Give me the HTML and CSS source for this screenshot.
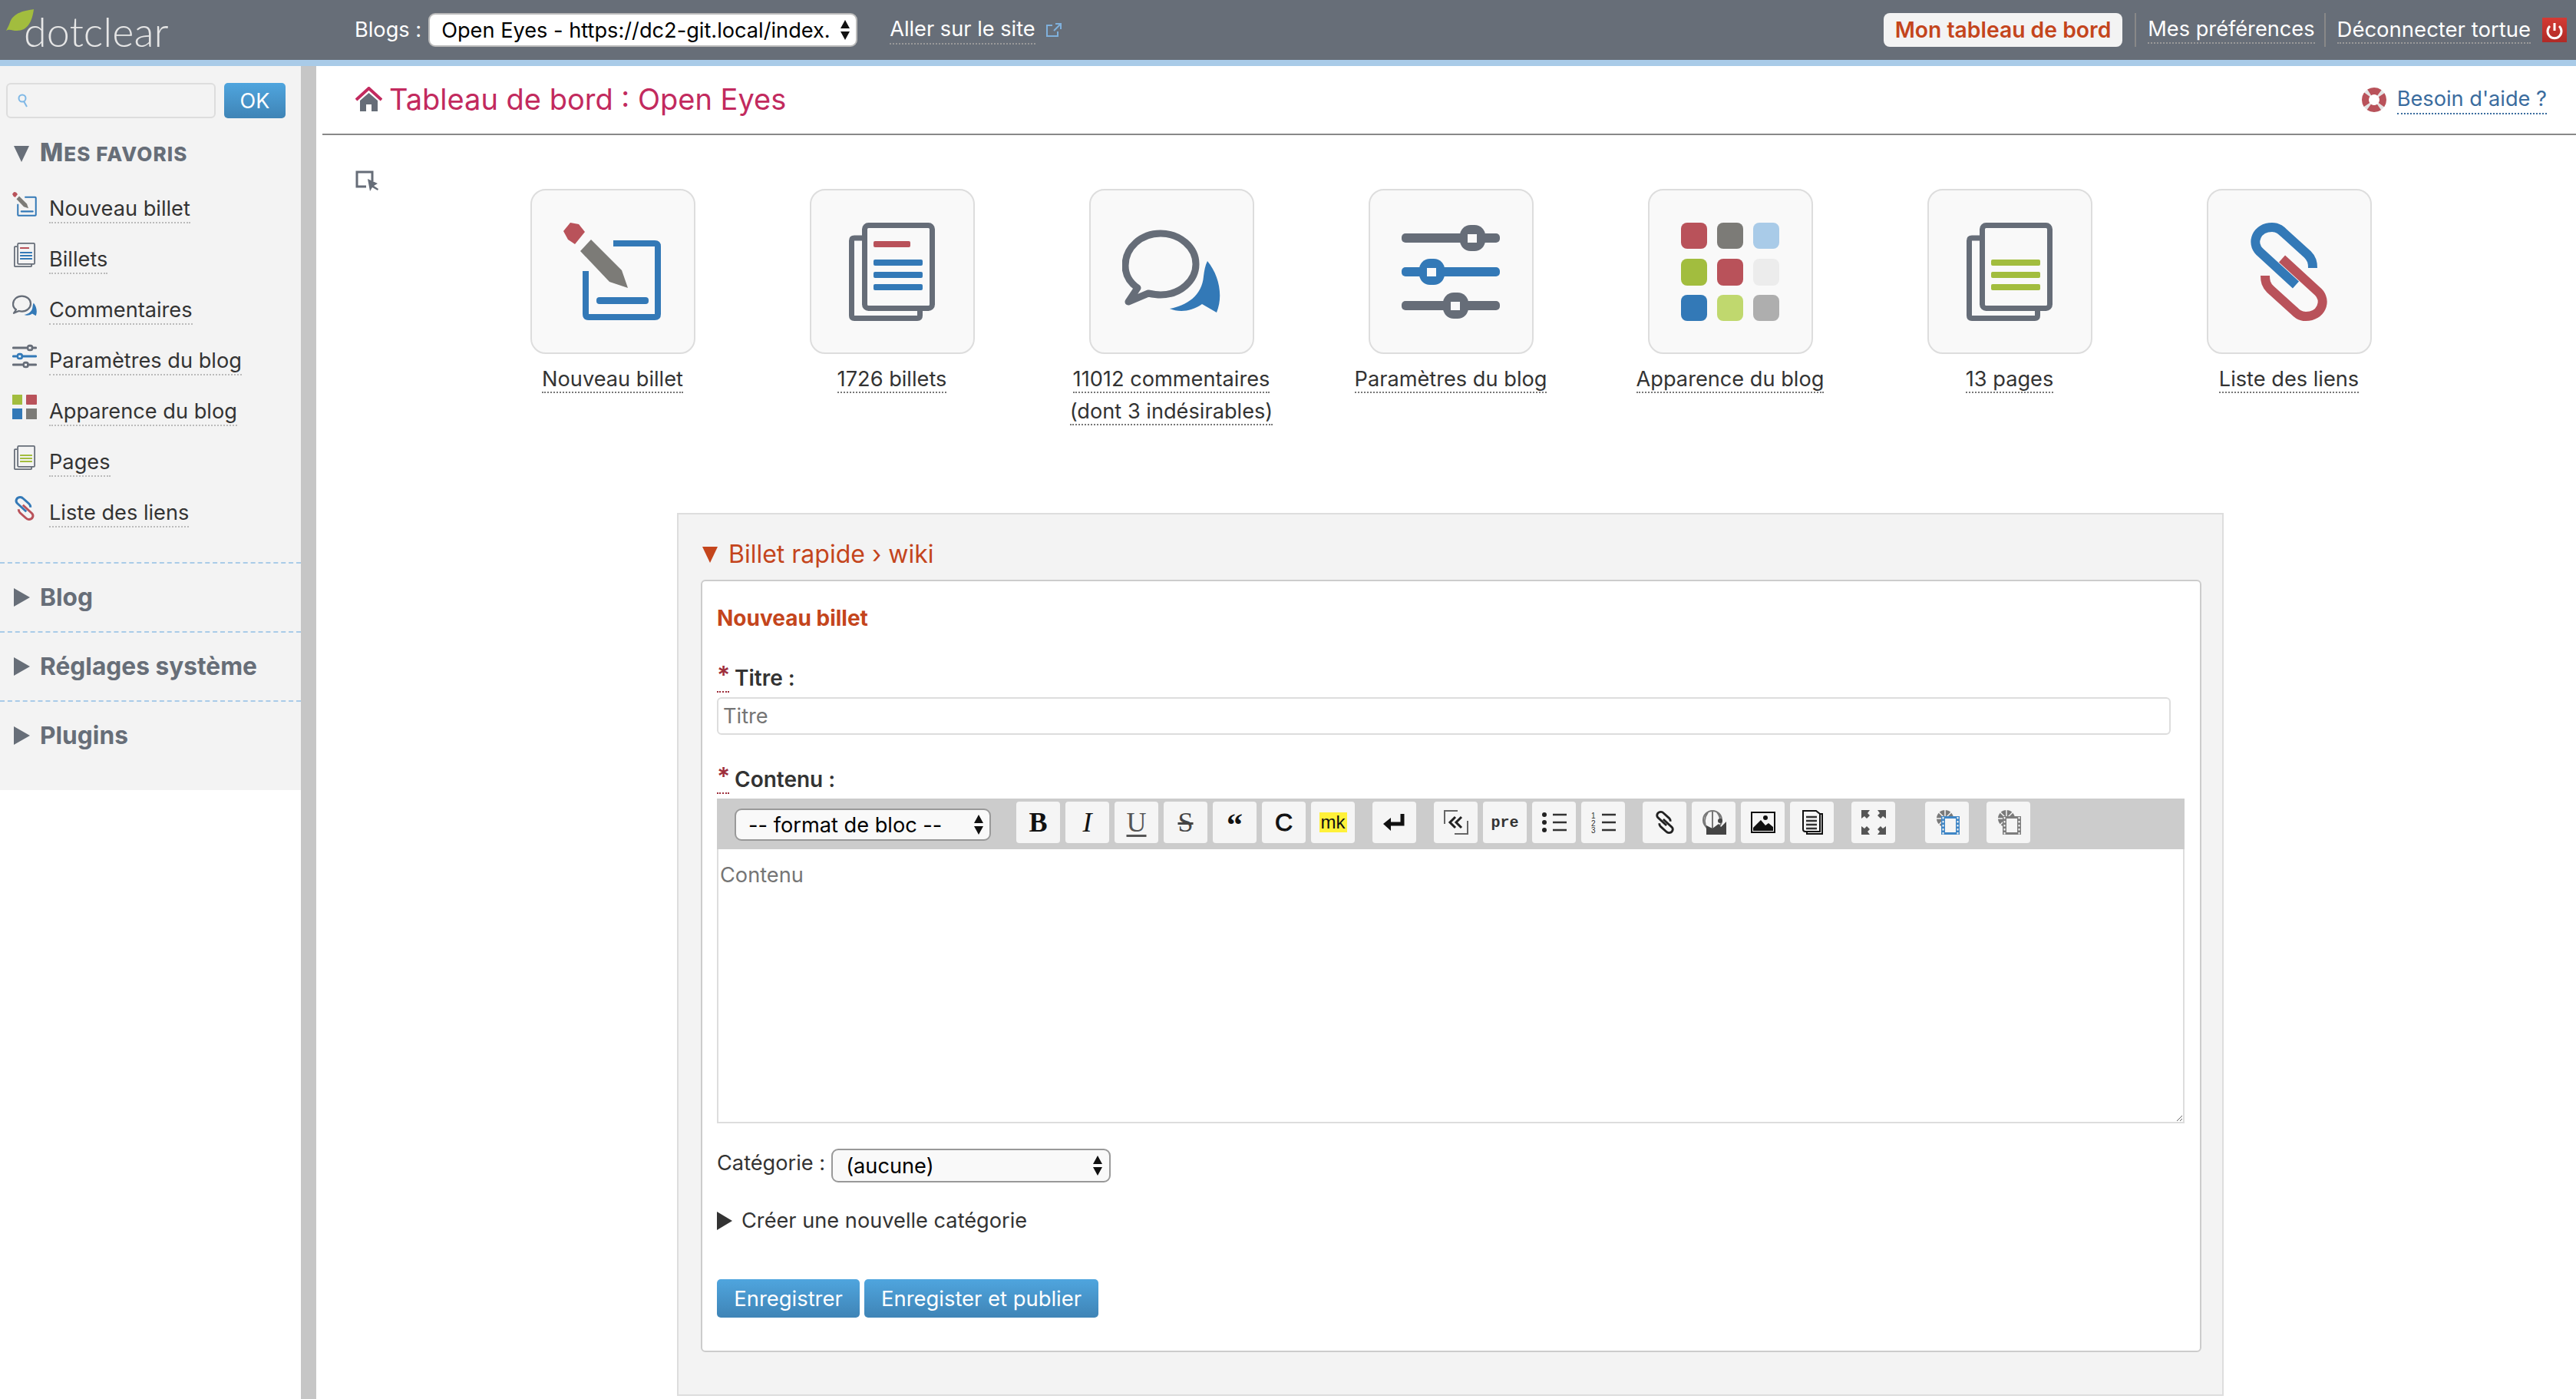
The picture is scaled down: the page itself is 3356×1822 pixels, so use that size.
FILE: index.html
```html
<!DOCTYPE html>
<html lang="fr">
<head>
    <meta charset="UTF-8">
    <meta name="viewport" content="width=device-width, initial-scale=1.0">
    <title>Tableau de bord : Open Eyes</title>
    <link rel="stylesheet" href="styles.css">
</head>
<body>
    <!-- shared icons, drawn on a 128 grid -->
    <svg class="sprites" xmlns="http://www.w3.org/2000/svg">
        <symbol id="i-new" viewBox="0 0 128 128">
            <path d="M65 27H119q4 0 4 4V119q0 4-4 4H33q-4 0-4-4V63" fill="none" stroke="#3379b7" stroke-width="8"/>
            <rect x="43" y="97" width="68" height="9" rx="4" fill="#3379b7"/>
            <path d="M9 0L20 2L28 12L15 28L6 22L0 11Z" fill="#b9525a"/>
            <path d="M36 22L76 62L84 85L60 77L22 37Z" fill="#7c7b77"/>
        </symbol>
        <symbol id="i-posts" viewBox="0 0 128 128">
            <rect x="28.500" y="3.500" width="88" height="108" rx="5" fill="none" stroke="#666d78" stroke-width="7"/>
            <path d="M25 20H15q-3.500 0-3.500 3.500V121q0 3.500 3.500 3.500H97q3.500 0 3.500-3.500V112" fill="none" stroke="#666d78" stroke-width="7"/>
            <rect x="40" y="24" width="48" height="8" rx="2" fill="#b9525a"/>
            <rect x="40" y="48" width="64" height="8" rx="2" fill="#3379b7"/>
            <rect x="40" y="64" width="64" height="8" rx="2" fill="#3379b7"/>
            <rect x="40" y="80" width="64" height="8" rx="2" fill="#3379b7"/>
        </symbol>
        <symbol id="i-pages" viewBox="0 0 128 128">
            <rect x="28.500" y="3.500" width="88" height="108" rx="5" fill="none" stroke="#666d78" stroke-width="7"/>
            <path d="M25 20H15q-3.500 0-3.500 3.500V121q0 3.500 3.500 3.500H97q3.500 0 3.500-3.500V112" fill="none" stroke="#666d78" stroke-width="7"/>
            <rect x="40" y="48" width="64" height="8" rx="2" fill="#a2bd3e"/>
            <rect x="40" y="64" width="64" height="8" rx="2" fill="#a2bd3e"/>
            <rect x="40" y="80" width="64" height="8" rx="2" fill="#a2bd3e"/>
        </symbol>
        <symbol id="i-comments" viewBox="0 0 128 128">
            <path d="M111 50C126 68 132 95 123 117L104 106C90 116 74 117 62 112C84 108 104 95 106 70C107 62 108 56 111 50Z" fill="#3379b7"/>
            <path d="M50 14C25 14 4 32 4 56C4 68 10 78 20 85L8 103L34 92C39 93 45 94 50 94C75 94 96 76 96 54C96 32 75 14 50 14Z" fill="none" stroke="#666d78" stroke-width="9" stroke-linejoin="round"/>
        </symbol>
        <symbol id="i-params" viewBox="0 0 128 128">
            <rect x="0" y="14" width="128" height="12" rx="5" fill="#666d78"/>
            <rect x="76" y="3" width="33" height="34" rx="14" fill="#666d78"/>
            <rect x="86" y="15" width="12" height="11" fill="#f9f9f9"/>
            <rect x="0" y="58" width="128" height="12" rx="5" fill="#3379b7"/>
            <rect x="23" y="47" width="33" height="34" rx="14" fill="#3379b7"/>
            <rect x="33" y="59" width="12" height="11" fill="#f9f9f9"/>
            <rect x="0" y="102" width="128" height="12" rx="5" fill="#666d78"/>
            <rect x="54" y="91" width="33" height="34" rx="14" fill="#666d78"/>
            <rect x="64" y="103" width="12" height="11" fill="#f9f9f9"/>
        </symbol>
        <symbol id="i-theme" viewBox="0 0 128 128">
            <rect x="0" y="0" width="34" height="34" rx="8" fill="#b9525a"/>
            <rect x="47" y="0" width="34" height="34" rx="8" fill="#7c7b77"/>
            <rect x="94" y="0" width="34" height="34" rx="8" fill="#a9cbe8"/>
            <rect x="0" y="47" width="34" height="35" rx="8" fill="#a2bd3e"/>
            <rect x="47" y="47" width="34" height="35" rx="8" fill="#b9525a"/>
            <rect x="94" y="47" width="34" height="35" rx="8" fill="#ececec"/>
            <rect x="0" y="94" width="34" height="34" rx="8" fill="#3379b7"/>
            <rect x="47" y="94" width="34" height="34" rx="8" fill="#c0d86e"/>
            <rect x="94" y="94" width="34" height="34" rx="8" fill="#aeaeae"/>
        </symbol>
        <symbol id="i-theme-small" viewBox="0 0 32 32">
            <rect x="0" y="0" width="13" height="13" fill="#a2bd3e"/>
            <rect x="18" y="0" width="14" height="13" rx="1" fill="#b9525a"/>
            <rect x="0" y="18" width="13" height="14" fill="#3379b7"/>
            <rect x="18" y="18" width="14" height="14" fill="#7c7b77"/>
        </symbol>
        <symbol id="i-links" viewBox="0 0 128 128">
            <path d="M73 81L26 38C14 26 22 6 42 6C50 6 54 10 58 14L88 41C94 47 95 52 95 59" fill="none" stroke="var(--link-a, #3379b7)" stroke-width="12"/>
            <path d="M55 47L102 90C114 102 106 122 86 122C78 122 74 118 70 114L40 87C34 81 33 76 33 69" fill="none" stroke="var(--link-b, #b9525a)" stroke-width="12"/>
        </symbol>
        <symbol id="i-film" viewBox="0 0 32 32">
            <circle cx="13" cy="11" r="11" fill="#7a7a7a"/>
            <circle cx="13" cy="11" r="2.500" fill="#f5f5f5"/>
            <path d="M13 0V22M2 11H24M5 3L21 19M21 3L5 19" stroke="#f5f5f5" stroke-width="1.500"/>
            <rect x="8" y="8" width="24" height="24" fill="var(--film, #7d7d7d)"/>
            <rect x="13" y="11" width="14" height="18" fill="#f5f5f5"/>
            <path d="M10.500 9V32M29.500 9V32" stroke="#f5f5f5" stroke-width="2" stroke-dasharray="2.500 2.500"/>
        </symbol>
    </svg>

    <header class="topbar">
        <a class="logo" href="#">
            <svg class="logo-leaf" width="36" height="28" viewBox="0 0 36 28"><path d="M36 0C24 2 10 4 5 17C4 20 2 24 0 28C4 25 8 28 14 28C28 28 34 16 36 0Z" fill="#a2bd3e"/></svg>
            <span class="logo-text">dotclear</span>
        </a>
        <label class="blog-switch" for="blogSelect">Blogs :</label>
        <select id="blogSelect" class="blog-select">
            <option>Open Eyes - https://dc2-git.local/index.</option>
        </select>
        <a class="site-link" href="#"><span class="dotted">Aller sur le site</span>
            <svg class="ext-icon" width="22" height="20" viewBox="0 0 22 20"><path d="M9 4H2V18H16V12" fill="none" stroke="#7fb0dc" stroke-width="2"/><path d="M11 11L20 2M13 2H20V9" fill="none" stroke="#7fb0dc" stroke-width="2"/></svg>
        </a>
        <nav class="user-nav">
            <a class="user-current" href="#">Mon tableau de bord</a>
            <a class="user-link user-prefs" href="#"><span class="dotted">Mes préférences</span></a>
            <a class="user-link user-logout" href="#"><span class="dotted">Déconnecter tortue</span><span class="power"><svg width="32" height="32" viewBox="0 0 32 32"><path d="M10 11A9 9 0 1 0 22 11" fill="none" stroke="#fff" stroke-width="3"/><path d="M16 7V17" stroke="#fff" stroke-width="3"/></svg></span></a>
        </nav>
    </header>

    <div class="wrapper">
        <aside class="sidebar">
            <div class="sidebar-panel">
                <form class="search">
                    <div class="search-input">
                        <svg width="14" height="18" viewBox="0 0 14 18"><circle cx="6" cy="6" r="4.500" fill="none" stroke="#7fb8e6" stroke-width="2"/><path d="M8 10L12 17" stroke="#7fb8e6" stroke-width="2"/></svg>
                    </div>
                    <button class="btn search-btn" type="button">OK</button>
                </form>

                <h3 class="fav-title"><span class="tri-down tri-side"></span><span class="fav-text">Mes favoris</span></h3>
                <ul class="fav-list">
                    <li><svg class="fav-icon"><use href="#i-new"/></svg><a href="#">Nouveau billet</a></li>
                    <li><svg class="fav-icon"><use href="#i-posts"/></svg><a href="#">Billets</a></li>
                    <li><svg class="fav-icon"><use href="#i-comments"/></svg><a href="#">Commentaires</a></li>
                    <li><svg class="fav-icon"><use href="#i-params"/></svg><a href="#">Paramètres du blog</a></li>
                    <li><svg class="fav-icon"><use href="#i-theme-small"/></svg><a href="#">Apparence du blog</a></li>
                    <li><svg class="fav-icon"><use href="#i-pages"/></svg><a href="#">Pages</a></li>
                    <li><svg class="fav-icon"><use href="#i-links"/></svg><a href="#">Liste des liens</a></li>
                </ul>

                <h3 class="menu-title"><span class="tri-right tri-side"></span>Blog</h3>
                <h3 class="menu-title"><span class="tri-right tri-side"></span>Réglages système</h3>
                <h3 class="menu-title"><span class="tri-right tri-side"></span>Plugins</h3>
            </div>
        </aside>

        <main class="content">
            <div class="page-head">
                <h2 class="page-title">
                    <svg width="35" height="32" viewBox="0 0 35 32"><path d="M1 17L17.500 2L34 17" fill="none" stroke="#c22a5e" stroke-width="4"/><path d="M6 18L17.500 8L29 18V32H21V23H14V32H6Z" fill="#666d78"/></svg>
                    Tableau de bord : Open Eyes
                </h2>
                <a class="help-link" href="#">
                    <svg width="32" height="32" viewBox="0 0 32 32"><circle cx="16" cy="16" r="11.500" fill="none" stroke="#e4e4e4" stroke-width="9"/><circle cx="16" cy="16" r="11.500" fill="none" stroke="#b9525a" stroke-width="9" stroke-dasharray="14 4.060" stroke-dashoffset="7"/></svg>
                    <span class="dotted">Besoin d'aide ?</span>
                </a>
            </div>

            <div class="dash">
                <div class="dash-toggle">
                    <svg width="32" height="28" viewBox="0 0 32 28"><path d="M22 14V2H2V21H14" fill="none" stroke="#666d78" stroke-width="3"/><path d="M16 11L19 27L22 22L29 26L30 24L24 20L29 17Z" fill="#666d78"/></svg>
                </div>
                <ul class="dash-list">
                    <li><span class="dash-card"><svg class="dash-icon"><use href="#i-new"/></svg></span><a href="#">Nouveau billet</a></li>
                    <li><span class="dash-card"><svg class="dash-icon"><use href="#i-posts"/></svg></span><a href="#">1726 billets</a></li>
                    <li><span class="dash-card"><svg class="dash-icon"><use href="#i-comments"/></svg></span><a href="#">11012 commentaires</a><br><a href="#">(dont 3 indésirables)</a></li>
                    <li><span class="dash-card"><svg class="dash-icon"><use href="#i-params"/></svg></span><a href="#">Paramètres du blog</a></li>
                    <li><span class="dash-card"><svg class="dash-icon"><use href="#i-theme"/></svg></span><a href="#">Apparence du blog</a></li>
                    <li><span class="dash-card"><svg class="dash-icon"><use href="#i-pages"/></svg></span><a href="#">13 pages</a></li>
                    <li><span class="dash-card"><svg class="dash-icon"><use href="#i-links"/></svg></span><a href="#">Liste des liens</a></li>
                </ul>
            </div>

            <section class="quick-box">
                <h3 class="quick-title"><span class="tri-down tri-orange"></span>Billet rapide › wiki</h3>
                <form class="quick-form">
                    <h4 class="form-title">Nouveau billet</h4>

                    <label class="req-label label-title" for="title"><abbr class="req">*</abbr>Titre :</label>
                    <input class="title-input" type="text" id="title" placeholder="Titre">

                    <label class="req-label label-content" for="content"><abbr class="req">*</abbr>Contenu :</label>
                    <div class="toolbar">
                        <select class="format-select"><option>-- format de bloc --</option></select>
                        <button class="tb tb-text tb-b" type="button">B</button>
                        <button class="tb tb-text tb-i" type="button">I</button>
                        <button class="tb tb-text tb-u" type="button">U</button>
                        <button class="tb tb-text tb-s" type="button">S</button>
                        <button class="tb tb-text tb-q" type="button">“</button>
                        <button class="tb tb-text tb-c" type="button">C</button>
                        <button class="tb tb-text" type="button"><span class="tb-mk">mk</span></button>
                        <button class="tb sep" type="button"><svg width="32" height="24" viewBox="0 0 32 24"><path d="M26 1V14H8" fill="none" stroke="#111" stroke-width="5"/><path d="M11 6L1 14L11 23Z" fill="#111"/></svg></button>
                        <button class="tb sep" type="button"><svg width="32" height="32" viewBox="0 0 32 32"><path d="M18 1H1V18M14 31H31V14" fill="none" stroke="#666" stroke-width="2"/><path d="M15 9L8 16L15 23M23 9L16 16L23 23" fill="none" stroke="#222" stroke-width="3"/></svg></button>
                        <button class="tb tb-pre" type="button">pre</button>
                        <button class="tb" type="button"><svg width="32" height="26" viewBox="0 0 32 26"><circle cx="3" cy="3" r="3" fill="#222"/><circle cx="3" cy="13" r="3" fill="#222"/><circle cx="3" cy="23" r="3" fill="#222"/><path d="M14 3H32M14 13H32M14 23H32" stroke="#333" stroke-width="2.500"/></svg></button>
                        <button class="tb" type="button"><svg width="32" height="28" viewBox="0 0 32 28"><text x="0" y="9" class="tb-num">1</text><text x="0" y="19" class="tb-num">2</text><text x="0" y="28" class="tb-num">3</text><path d="M14 4H32M14 14H32M14 24H32" stroke="#333" stroke-width="2.500"/></svg></button>
                        <button class="tb sep" type="button"><svg class="tb-link" width="30" height="34"><use href="#i-links"/></svg></button>
                        <button class="tb" type="button"><svg width="32" height="32" viewBox="0 0 32 32"><circle cx="14" cy="13" r="12" fill="none" stroke="#777" stroke-width="2"/><path d="M14 1V26M8 3C3 10 3 18 7 24M20 3C24 8 24 11 24 13" fill="none" stroke="#777" stroke-width="2"/><circle cx="24" cy="14" r="3" fill="#444"/><path d="M6 32V20L14 24L22 18L25 22L32 15V32Z" fill="#444"/></svg></button>
                        <button class="tb" type="button"><svg width="32" height="28" viewBox="0 0 32 28"><rect x="1" y="1" width="30" height="26" fill="#f5f5f5" stroke="#111" stroke-width="2"/><circle cx="19" cy="8" r="3" fill="#111"/><path d="M3 25V21L13 11L19 18L23 15L29 20V25Z" fill="#111"/></svg></button>
                        <button class="tb" type="button"><svg width="28" height="32" viewBox="0 0 28 32"><path d="M24 5H27V31H7V28" fill="none" stroke="#111" stroke-width="2"/><path d="M2 1H19L24 5V28H5Q2 28 2 25Z" fill="#f5f5f5" stroke="#111" stroke-width="2"/><path d="M6 9H20M6 14H20M6 19H20M6 24H20" stroke="#333" stroke-width="2.500"/></svg></button>
                        <button class="tb sep" type="button"><svg width="32" height="32" viewBox="0 0 32 32"><path d="M0 0H11L8 4L11 7L7 11L4 8L0 11ZM32 0H21L24 4L21 7L25 11L28 8L32 11ZM0 32H11L8 28L11 25L7 21L4 24L0 21ZM32 32H21L24 28L21 25L25 21L28 24L32 21Z" fill="#555"/></svg></button>
                        <button class="tb sep-wide tb-film-blue" type="button"><svg width="32" height="32"><use href="#i-film"/></svg></button>
                        <button class="tb sep" type="button"><svg width="32" height="32"><use href="#i-film"/></svg></button>
                    </div>
                    <textarea class="content-input" id="content" placeholder="Contenu"></textarea>

                    <p class="cat-row">
                        <label for="cat">Catégorie :</label>
                        <select id="cat" class="cat-select"><option>(aucune)</option></select>
                    </p>
                    <p class="new-cat"><span class="tri-right tri-dark"></span>Créer une nouvelle catégorie</p>
                    <p class="form-actions">
                        <button class="btn form-btn form-btn-a" type="button">Enregistrer</button>
                        <button class="btn form-btn form-btn-b" type="button">Enregister et publier</button>
                    </p>
                </form>
            </section>
        </main>
    </div>
</body>
</html>
```

FILE: styles.css
```css
html, body {
    height: 100%;
    overflow: hidden;
}

body {
    margin: 0;
    font-family: Inter, "Liberation Sans", sans-serif;
    font-size: 27.2px;
    line-height: 36px;
    color: #333;
    background-color: #fff;
}

a {
    color: inherit;
    text-decoration: none;
}

h2, h3, h4, p, ul {
    margin: 0;
    padding: 0;
}

ul {
    list-style: none;
}

svg {
    display: block;
    flex: none;
}

.sprites {
    display: none;
}

.dotted {
    border-bottom: 2px dotted #999;
}

/* triangles */
.tri-down, .tri-right {
    display: inline-block;
    width: 0;
    height: 0;
    flex: none;
}

.tri-side.tri-down {
    border-left: 10px solid transparent;
    border-right: 10px solid transparent;
    border-top: 21px solid #676e78;
    margin: 0 14px 0 18px;
}

.tri-side.tri-right {
    border-top: 12px solid transparent;
    border-bottom: 12px solid transparent;
    border-left: 21px solid #676e78;
    margin: 0 13px 0 18px;
}

.tri-orange {
    border-left: 10px solid transparent;
    border-right: 10px solid transparent;
    border-top: 21px solid #c4451c;
    margin: 0 14px 0 2px;
}

.tri-dark {
    border-top: 12px solid transparent;
    border-bottom: 12px solid transparent;
    border-left: 20px solid #333;
    margin-right: 12px;
}

/* top bar */
.topbar {
    display: flex;
    align-items: center;
    height: 78px;
    background-color: #676e78;
    border-bottom: 8px solid #a9cbe8;
    color: #fff;
}

.logo {
    display: flex;
    width: 462px;
    padding-left: 8px;
    box-sizing: border-box;
    height: 78px;
    flex: none;
}

.logo-leaf {
    margin-top: 12px;
}

.logo-text {
    font-family: Lato, "Open Sans", sans-serif;
    font-weight: 300;
    font-size: 54px;
    line-height: 78px;
    color: #e6e6e6;
    margin-left: -13px;
    margin-top: 2px;
}

.blog-switch {
    margin-right: 9px;
}

.blog-select, .format-select, .cat-select {
    appearance: none;
    font-family: Inter, "Liberation Sans", sans-serif;
    font-size: 27.2px;
    color: #000;
    background-repeat: no-repeat;
    background-image: url("data:image/svg+xml,%3Csvg xmlns='http://www.w3.org/2000/svg' width='14' height='28'%3E%3Cpath d='M7 1L13 12H1ZM7 27L1 16H13Z' fill='%23111'/%3E%3C/svg%3E");
}

.blog-select {
    width: 559px;
    height: 44px;
    padding: 0 0 0 15px;
    background-color: #fff;
    border: 2px solid #bbb;
    border-radius: 9px;
    background-position: right 7px center;
}

.site-link {
    display: flex;
    align-items: center;
    margin-left: 42px;
}

.ext-icon {
    margin-left: 13px;
}

.user-nav {
    display: flex;
    align-items: center;
    margin-left: auto;
    padding-right: 12px;
}

.user-current {
    height: 44px;
    padding: 0 15px;
    font-size: 28.300px;
    line-height: 44px;
    background-color: #f3f3f3;
    color: #c4451c;
    font-weight: 600;
    border-radius: 8px;
    margin-right: 16px;
}

.user-link {
    display: flex;
    align-items: center;
    height: 44px;
    padding-left: 15px;
    border-left: 2px solid #888;
}

.user-link .dotted {
    line-height: 34px;
}

.user-prefs {
    margin-right: 12px;
}

.user-logout {
    font-size: 27.500px;
}

.power {
    width: 32px;
    height: 32px;
    background: linear-gradient(#d43a34, #b02a26);
    margin-left: 15px;
}

/* layout */
.wrapper {
    display: flex;
    height: calc(100vh - 86px);
}

.sidebar {
    width: 392px;
    flex: none;
    border-right: 20px solid #c6c6c6;
}

.sidebar-panel {
    background-color: #f3f3f3;
    padding: 22px 0 27px;
}

.search {
    display: flex;
    padding-left: 8px;
    gap: 11px;
}

.search-input {
    width: 273px;
    height: 46px;
    box-sizing: border-box;
    border: 2px solid #ddd;
    border-radius: 6px;
    padding: 12px 0 0 13px;
}

.btn {
    font-family: Inter, "Liberation Sans", sans-serif;
    color: #fff;
    border: 0;
    border-radius: 5px;
    background: linear-gradient(#4fa5de, #3f84b6);
    font-size: 27px;
    padding: 0;
}

.search-btn {
    width: 80px;
    height: 46px;
}

.fav-title {
    display: flex;
    align-items: center;
    height: 36px;
    margin-top: 28px;
    font-weight: 800;
    color: #676e78;
}

.fav-text {
    display: block;
    font-size: 26px;
    letter-spacing: 1.100px;
    text-transform: uppercase;
}

.fav-text::first-letter {
    font-size: 32px;
}

.fav-list {
    margin-top: 32px;
    padding-bottom: 20px;
}

.fav-list li {
    display: flex;
    height: 66px;
    padding-left: 16px;
    gap: 16px;
}

.fav-icon {
    width: 32px;
    height: 32px;
}

.fav-list a {
    height: 35px;
    margin-top: 4px;
    border-bottom: 2px dotted #bbb;
}

.menu-title {
    display: flex;
    align-items: center;
    height: 88px;
    border-top: 2px dashed #a9cbe8;
    font-size: 31.700px;
    font-weight: 700;
    color: #676e78;
}

.content {
    flex: 1;
    min-width: 0;
}

.page-head {
    display: flex;
    justify-content: space-between;
    align-items: center;
    height: 88px;
    margin-left: 8px;
    padding: 0 38px 0 43px;
    border-bottom: 2px solid #888;
}

.page-title {
    display: flex;
    align-items: center;
    gap: 9px;
    font-size: 38px;
    font-weight: 400;
    color: #c22a5e;
    margin-top: -3px;
}

.help-link {
    display: flex;
    align-items: center;
    gap: 14px;
    color: #3a6c9e;
}

.help-link .dotted {
    border-bottom-color: #3a6c9e;
}

/* dashboard icons */
.dash {
    display: flex;
    margin-top: 46px;
    padding-left: 51px;
}

.dash-toggle {
    width: 153px;
    flex: none;
}

.dash-list {
    display: flex;
    margin-top: 24px;
}

.dash-list li {
    width: 364px;
    line-height: 42px;
    text-align: center;
}

.dash-card {
    display: flex;
    align-items: flex-start;
    justify-content: center;
    box-sizing: border-box;
    width: 215px;
    height: 215px;
    margin: 0 auto 12px;
    padding-top: 42px;
    background-color: #f9f9f9;
    border: 2px solid #ddd;
    border-radius: 20px;
}

.dash-icon {
    width: 128px;
    height: 128px;
}

.dash-list a {
    border-bottom: 2px dotted #777;
}

/* quick entry */
.quick-box {
    box-sizing: border-box;
    width: 2015px;
    height: 1150px;
    margin: 111px 0 0 470px;
    padding: 19px 27px 0 29px;
    background-color: #f3f3f3;
    border: 2px solid #ddd;
}

.quick-title {
    display: flex;
    align-items: center;
    height: 66px;
    font-size: 32px;
    font-weight: 400;
    color: #c4451c;
}

.quick-form {
    box-sizing: border-box;
    height: 1006px;
    padding: 30px 20px 0 19px;
    background-color: #fff;
    border: 2px solid #ccc;
    border-radius: 6px;
}

.form-title {
    margin: 0;
    font-size: 28px;
    font-weight: 700;
    color: #c4451c;
}

.req-label {
    display: block;
    font-size: 28px;
    font-weight: 600;
}

.label-title {
    margin-top: 42px;
}

.label-content {
    margin-top: 40px;
}

.req {
    display: inline-block;
    width: 16px;
    margin-right: 7px;
    height: 37px;
    line-height: 30px;
    color: #9e2f3c;
    font-size: 32px;
    border-bottom: 2px dotted #9e2f3c;
    box-sizing: border-box;
    vertical-align: top;
}

.title-input {
    display: block;
    box-sizing: border-box;
    width: 1894px;
    height: 49px;
    margin-top: 6px;
    padding: 0 6px;
    font-family: Inter, "Liberation Sans", sans-serif;
    font-size: 27.2px;
    border: 2px solid #ddd;
    border-radius: 6px;
}

.title-input::placeholder, .content-input::placeholder {
    color: #757575;
}

.toolbar {
    display: flex;
    align-items: flex-start;
    gap: 7px;
    box-sizing: border-box;
    height: 66px;
    margin-top: 6px;
    padding: 4px 0 0 23px;
    background-color: #ccc;
}

.format-select {
    width: 334px;
    height: 42px;
    margin: 9px 26px 0 0;
    padding: 0 0 0 16px;
    background-color: #f9f9f9;
    border: 2px solid #999;
    border-radius: 9px;
    background-position: right 7px center;
}

.tb {
    display: flex;
    align-items: center;
    justify-content: center;
    width: 57px;
    height: 54px;
    padding: 0;
    border: 0;
    border-radius: 4px;
    background-color: #f5f5f5;
    color: #111;
}

.sep {
    margin-left: 16px;
}

.sep-wide {
    margin-left: 32px;
}

.tb-text {
    font-family: "Liberation Serif", serif;
    font-size: 36px;
}

.tb-b {
    font-weight: 700;
}

.tb-i {
    font-style: italic;
}

.tb-u {
    text-decoration: underline;
    text-underline-offset: 4px;
    color: #555;
}

.tb-s {
    text-decoration: line-through;
    color: #444;
}

.tb-q {
    font-weight: 700;
    font-size: 42px;
    line-height: 54px;
    padding-top: 6px;
}

.tb-c {
    font-family: "Liberation Sans", sans-serif;
    font-size: 32px;
    -webkit-text-stroke: 1px #111;
}

.tb-mk {
    padding: 1px 2px;
    line-height: 24px;
    background-color: #fff13a;
    font-family: "Liberation Sans", sans-serif;
    font-size: 24px;
}

.tb-pre {
    font-family: "Liberation Mono", monospace;
    font-size: 20px;
    font-weight: 700;
    color: #333;
}

.tb-num {
    font-family: "Liberation Sans", sans-serif;
    font-size: 10px;
    fill: #333;
}

.tb-link {
    --link-a: #222;
    --link-b: #222;
}

.tb-film-blue {
    --film: #3f86c6;
}

.content-input {
    display: block;
    box-sizing: border-box;
    width: 1912px;
    height: 357px;
    margin: 0;
    padding: 16px 2px;
    font-family: Inter, "Liberation Sans", sans-serif;
    font-size: 27.2px;
    line-height: 36px;
    border: 2px solid #ddd;
    border-top: 0;
    outline: 0;
}

.cat-row {
    display: flex;
    align-items: center;
    gap: 8px;
    margin-top: 33px;
}

.cat-row label {
    margin-top: -6px;
}

.cat-select {
    width: 364px;
    height: 44px;
    padding: 0 0 0 17px;
    background-color: #f9f9f9;
    border: 2px solid #999;
    border-radius: 9px;
    background-position: right 8px center;
}

.new-cat {
    display: flex;
    align-items: center;
    margin-top: 32px;
}

.form-actions {
    display: flex;
    gap: 6px;
    margin-top: 58px;
}

.form-btn {
    height: 50px;
    font-size: 27.400px;
}

.form-btn-a {
    width: 186px;
}

.form-btn-b {
    width: 305px;
}
```
